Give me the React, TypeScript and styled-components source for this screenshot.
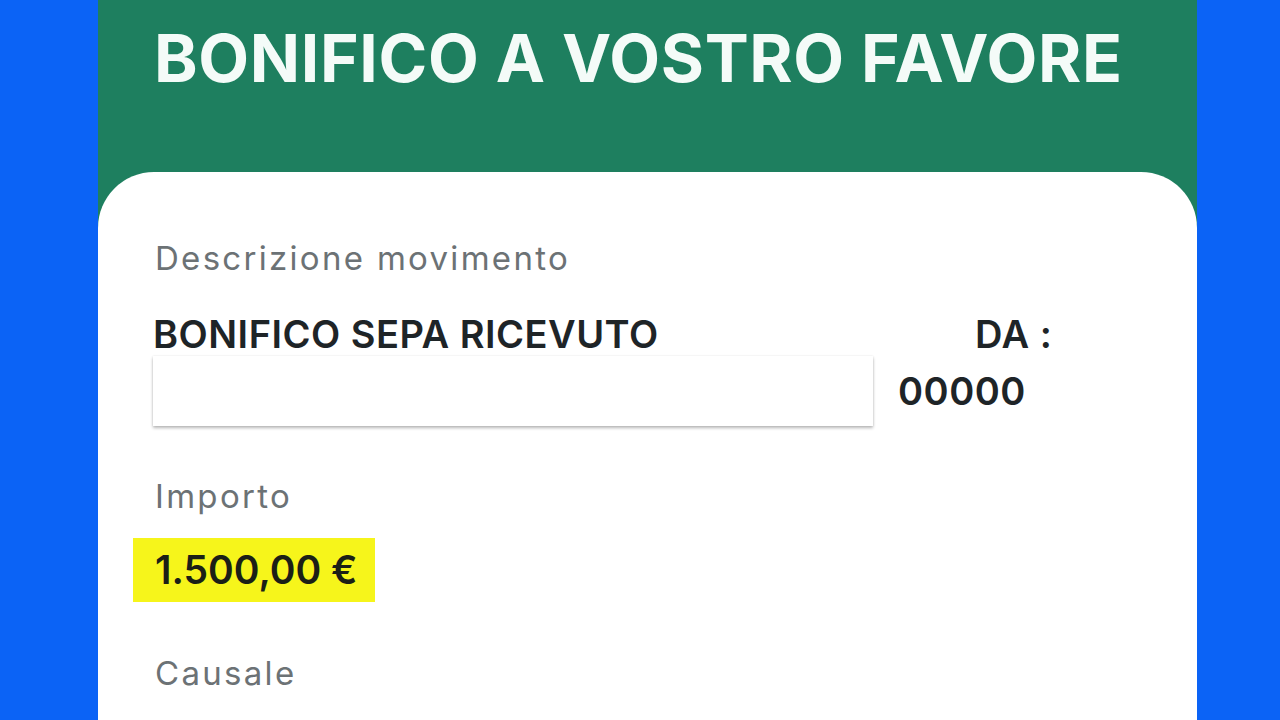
import React from "react";
import styled, { createGlobalStyle } from "styled-components";

const Global = createGlobalStyle`
  html, body { margin: 0; padding: 0; }
  body { background: #0b63f6; font-family: "Inter", "Noto Sans", sans-serif; }
`;

const Page = styled.div`
  width: 1280px;
  height: 720px;
  overflow: hidden;
  background: #0b63f6;
  display: flex;
  padding-left: 98px;
  box-sizing: border-box;
`;

const Panel = styled.div`
  width: 1099px;
  background: #1e7f5f;
  display: flex;
  flex-direction: column;
`;

const Header = styled.div`
  height: 172px;
  padding-left: 56px;
  box-sizing: border-box;
`;

const Title = styled.h1`
  margin: 0;
  padding-top: 22px;
  color: #f4fbf8;
  font-family: "Inter", sans-serif;
  font-weight: 700;
  font-size: 66px;
  line-height: 72px;
  letter-spacing: 0.65px;
  white-space: nowrap;
`;

const Card = styled.div`
  flex: 1;
  background: #ffffff;
  border-radius: 56px 56px 0 0;
  padding: 66px 0 0 57px;
`;

const Label = styled.div`
  color: #6c7275;
  font-family: "Inter", sans-serif;
  font-weight: 400;
  font-size: 33px;
  line-height: 40px;
  letter-spacing: 2.3px;
`;

const MoveGrid = styled.div`
  display: grid;
  grid-template-columns: 720px auto;
  column-gap: 25px;
  align-items: center;
  margin-top: 34px;
  margin-left: -2px;
`;

const Strong = styled.div<{ $indent?: number }>`
  color: #1e2427;
  font-family: "Inter", sans-serif;
  font-weight: 600;
  font-size: 38px;
  line-height: 44px;
  letter-spacing: 0.5px;
  padding-left: ${(p) => p.$indent ?? 0}px;
  white-space: nowrap;
`;

const InputBox = styled.div`
  height: 70px;
  background: #fff;
  box-shadow: 0 2px 3px rgba(0, 0, 0, 0.28), 0 0 2px rgba(0, 0, 0, 0.08);
`;

const Section = styled.div<{ $top: number }>`
  margin-top: ${(p) => p.$top}px;
`;

const Highlight = styled.div`
  display: inline-block;
  margin-left: -22px;
  margin-top: 22px;
  width: 242px;
  height: 64px;
  box-sizing: border-box;
  padding-left: 22px;
  background: #f6f51b;
  color: #1b1f16;
  font-family: "Inter", sans-serif;
  font-weight: 600;
  font-size: 39px;
  line-height: 64px;
  white-space: nowrap;
`;

export default function App() {
  return (
    <Page>
      <Global />
      <Panel>
        <Header>
          <Title>BONIFICO A VOSTRO FAVORE</Title>
        </Header>
        <Card>
          <Label>Descrizione movimento</Label>
          <MoveGrid>
            <Strong>BONIFICO SEPA RICEVUTO</Strong>
            <Strong $indent={77}>DA :</Strong>
            <InputBox />
            <Strong>00000</Strong>
          </MoveGrid>
          <Section $top={50}>
            <Label>Importo</Label>
            <Highlight>1.500,00 €</Highlight>
          </Section>
          <Section $top={51}>
            <Label>Causale</Label>
          </Section>
        </Card>
      </Panel>
    </Page>
  );
}
